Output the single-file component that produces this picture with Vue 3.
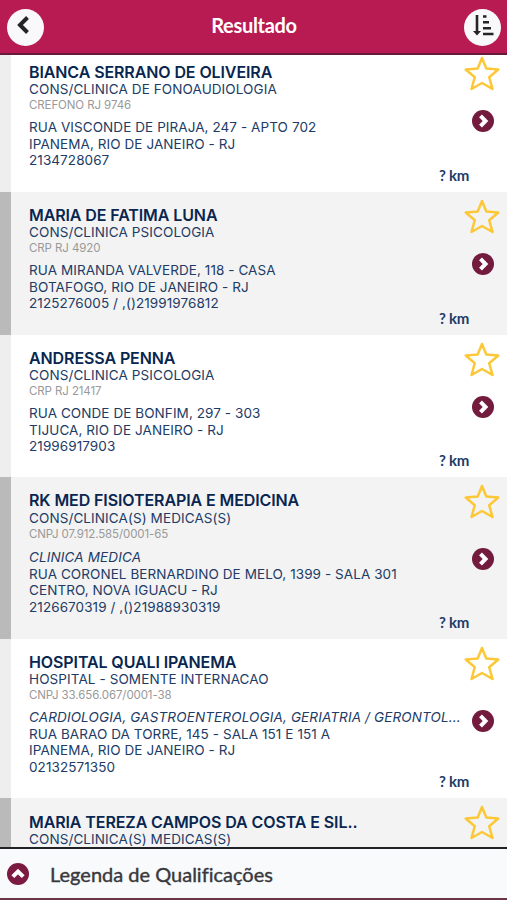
<template>
  <div class="screen">
    <header class="topbar">
      <button class="round-btn" aria-label="Voltar">
        <svg width="37" height="37" viewBox="0 0 37 37">
          <path d="M20.500 8.500 L13 16 L20.500 23.500" fill="none" stroke="#252528" stroke-width="4" />
        </svg>
      </button>
      <h1>Resultado</h1>
      <button class="round-btn" aria-label="Ordenar">
        <svg width="37" height="37" viewBox="0 0 37 37" fill="none" stroke="#252528">
          <path d="M13 6 V24" stroke-width="2.600" />
          <path d="M9 22 H17 L13 26.500 Z" fill="#252528" stroke="none" />
          <path d="M19 7.500 H22.500 M19 13.300 H25 M19 19.200 H27 M19 25 H29.500" stroke-width="2.600" />
        </svg>
      </button>
    </header>

    <main class="list">
      <article
        v-for="item in results"
        :key="item.name"
        class="card"
        :style="{ height: item.height + 'px' }"
      >
        <div class="info">
          <h2>{{ item.name }}</h2>
          <p class="type">{{ item.type }}</p>
          <p v-if="item.register" class="register">{{ item.register }}</p>
          <p v-if="item.specialty" class="line specialty">{{ item.specialty }}</p>
          <p v-for="line in item.lines" :key="line" class="line">{{ line }}</p>
        </div>
        <div class="actions">
          <svg class="star" width="38" height="38" viewBox="0 0 38 38">
            <path
              d="M19 4 L23.300 14.500 L35.300 15.500 L26.200 23.200 L29.500 35 L19 29 L8.500 35 L11.800 23.200 L2.700 15.500 L14.700 14.500 Z"
              fill="none"
              stroke="#fcc838"
              stroke-width="2.500"
              stroke-linejoin="round"
            />
          </svg>
          <svg v-if="item.lines.length" class="go" :class="{ low: item.specialty }" width="22" height="22" viewBox="0 0 22 22">
            <circle cx="11" cy="11" r="11" fill="#731b3d" />
            <path d="M8.500 5.800 L13.500 11 L8.500 16.200" fill="none" stroke="#fff" stroke-width="4" />
          </svg>
        </div>
        <span v-if="item.lines.length" class="distance">? km</span>
      </article>
    </main>

    <footer class="legend">
      <svg width="22" height="22" viewBox="0 0 22 22">
        <circle cx="11" cy="11" r="11" fill="#7b1b42" />
        <path d="M5.800 13.700 L11 8.500 L16.200 13.700" fill="none" stroke="#fff" stroke-width="4" />
      </svg>
      <span>Legenda de Qualificações</span>
    </footer>
  </div>
</template>

<script setup>
const results = [
  {
    name: 'BIANCA SERRANO DE OLIVEIRA',
    type: 'CONS/CLINICA DE FONOAUDIOLOGIA',
    register: 'CREFONO RJ 9746',
    lines: ['RUA VISCONDE DE PIRAJA, 247 - APTO 702', 'IPANEMA, RIO DE JANEIRO - RJ', '2134728067'],
    height: 143
  },
  {
    name: 'MARIA DE FATIMA LUNA',
    type: 'CONS/CLINICA PSICOLOGIA',
    register: 'CRP RJ 4920',
    lines: ['RUA MIRANDA VALVERDE, 118 - CASA', 'BOTAFOGO, RIO DE JANEIRO - RJ', '2125276005 / ,()21991976812'],
    height: 143
  },
  {
    name: 'ANDRESSA PENNA',
    type: 'CONS/CLINICA PSICOLOGIA',
    register: 'CRP RJ 21417',
    lines: ['RUA CONDE DE BONFIM, 297 - 303', 'TIJUCA, RIO DE JANEIRO - RJ', '21996917903'],
    height: 142
  },
  {
    name: 'RK MED FISIOTERAPIA E MEDICINA',
    type: 'CONS/CLINICA(S) MEDICAS(S)',
    register: 'CNPJ 07.912.585/0001-65',
    specialty: 'CLINICA MEDICA',
    lines: ['RUA CORONEL BERNARDINO DE MELO, 1399 - SALA 301', 'CENTRO, NOVA IGUACU - RJ', '2126670319 / ,()21988930319'],
    height: 162
  },
  {
    name: 'HOSPITAL QUALI IPANEMA',
    type: 'HOSPITAL - SOMENTE INTERNACAO',
    register: 'CNPJ 33.656.067/0001-38',
    specialty: 'CARDIOLOGIA, GASTROENTEROLOGIA, GERIATRIA / GERONTOL...',
    lines: ['RUA BARAO DA TORRE, 145 - SALA 151 E 151 A', 'IPANEMA, RIO DE JANEIRO - RJ', '02132571350'],
    height: 159
  },
  {
    name: 'MARIA TEREZA CAMPOS DA COSTA E SIL..',
    type: 'CONS/CLINICA(S) MEDICAS(S)',
    register: '',
    lines: [],
    height: 143
  }
]
</script>

<style>
body {
  margin: 0;
}
</style>

<style scoped>
.screen {
  display: flex;
  flex-direction: column;
  width: 507px;
  height: 900px;
  overflow: hidden;
  background: #fff;
  font-family: Inter, Lato, sans-serif;
  color: #213b66;
}
h1,
h2,
p {
  margin: 0;
}
.topbar {
  flex: none;
  box-sizing: border-box;
  display: flex;
  align-items: center;
  justify-content: space-between;
  height: 55px;
  padding: 1px 6px 0 7px;
  background: #b81b52;
  border-bottom: 2px solid #681b38;
}
.topbar h1 {
  font-family: Lato, sans-serif;
  font-size: 20px;
  font-weight: 700;
  color: #fff;
  line-height: 24px;
  letter-spacing: -0.3px;
  padding: 0 0 4px 0;
}
.round-btn {
  width: 37px;
  height: 37px;
  padding: 0;
  border: 0;
  border-radius: 50%;
  background: #f9f8fa;
}
.round-btn svg {
  display: block;
}
.list {
  flex: 1;
  min-height: 0;
  overflow: hidden;
}
/* the list is scrolled a little, so the first card starts under the bar */
.card:first-child {
  margin-top: -6px;
}
.card {
  position: relative;
  box-sizing: border-box;
  display: flex;
  justify-content: space-between;
  padding: 13px 6px 0 18px;
  border-left: 11px solid #eee;
  background: #fff;
}
.card:nth-child(even) {
  background: #f3f3f3;
  border-left-color: #bababa;
}
.card:nth-child(4) h2 {
  margin-bottom: 1px;
}
.card:nth-child(6) {
  padding-top: 14px;
}
.info {
  white-space: nowrap;
}
h2 {
  font-size: 16px;
  font-weight: 600;
  line-height: 20px;
  letter-spacing: -0.1px;
  color: #082650;
}
.type {
  font-size: 13.500px;
  line-height: 14px;
  letter-spacing: 0.1px;
}
.register {
  font-size: 11.500px;
  line-height: 18px;
  letter-spacing: -0.1px;
  margin-bottom: 5px;
  color: #999;
}
.line {
  font-size: 13.500px;
  line-height: 16.500px;
  letter-spacing: 0.08px;
}
.specialty {
  font-style: italic;
  letter-spacing: 0.14px;
}
.card:nth-child(4) .specialty {
  margin-top: 6px;
}
.actions {
  position: absolute;
  top: 5px;
  right: 6px;
  width: 38px;
  display: flex;
  flex-direction: column;
  align-items: center;
}
.go {
  margin: 18px 0 0 2px;
}
.go.low {
  margin-top: 28px;
}
.distance {
  position: absolute;
  right: 38px;
  bottom: 8px;
  font-family: Lato, sans-serif;
  font-size: 15px;
  font-weight: 700;
  line-height: 18px;
  letter-spacing: -0.3px;
}
.legend {
  flex: none;
  box-sizing: border-box;
  display: flex;
  align-items: center;
  height: 53px;
  padding-left: 7px;
  background: #f9fafc;
  border-top: 2px solid #202124;
  border-bottom: 2px solid #6b3547;
}
.legend span {
  margin-left: 21px;
  font-family: Lato, sans-serif;
  font-size: 20px;
  font-variant-ligatures: none;
  color: #38383c;
  -webkit-text-stroke: 0.4px #38383c;
}
</style>
